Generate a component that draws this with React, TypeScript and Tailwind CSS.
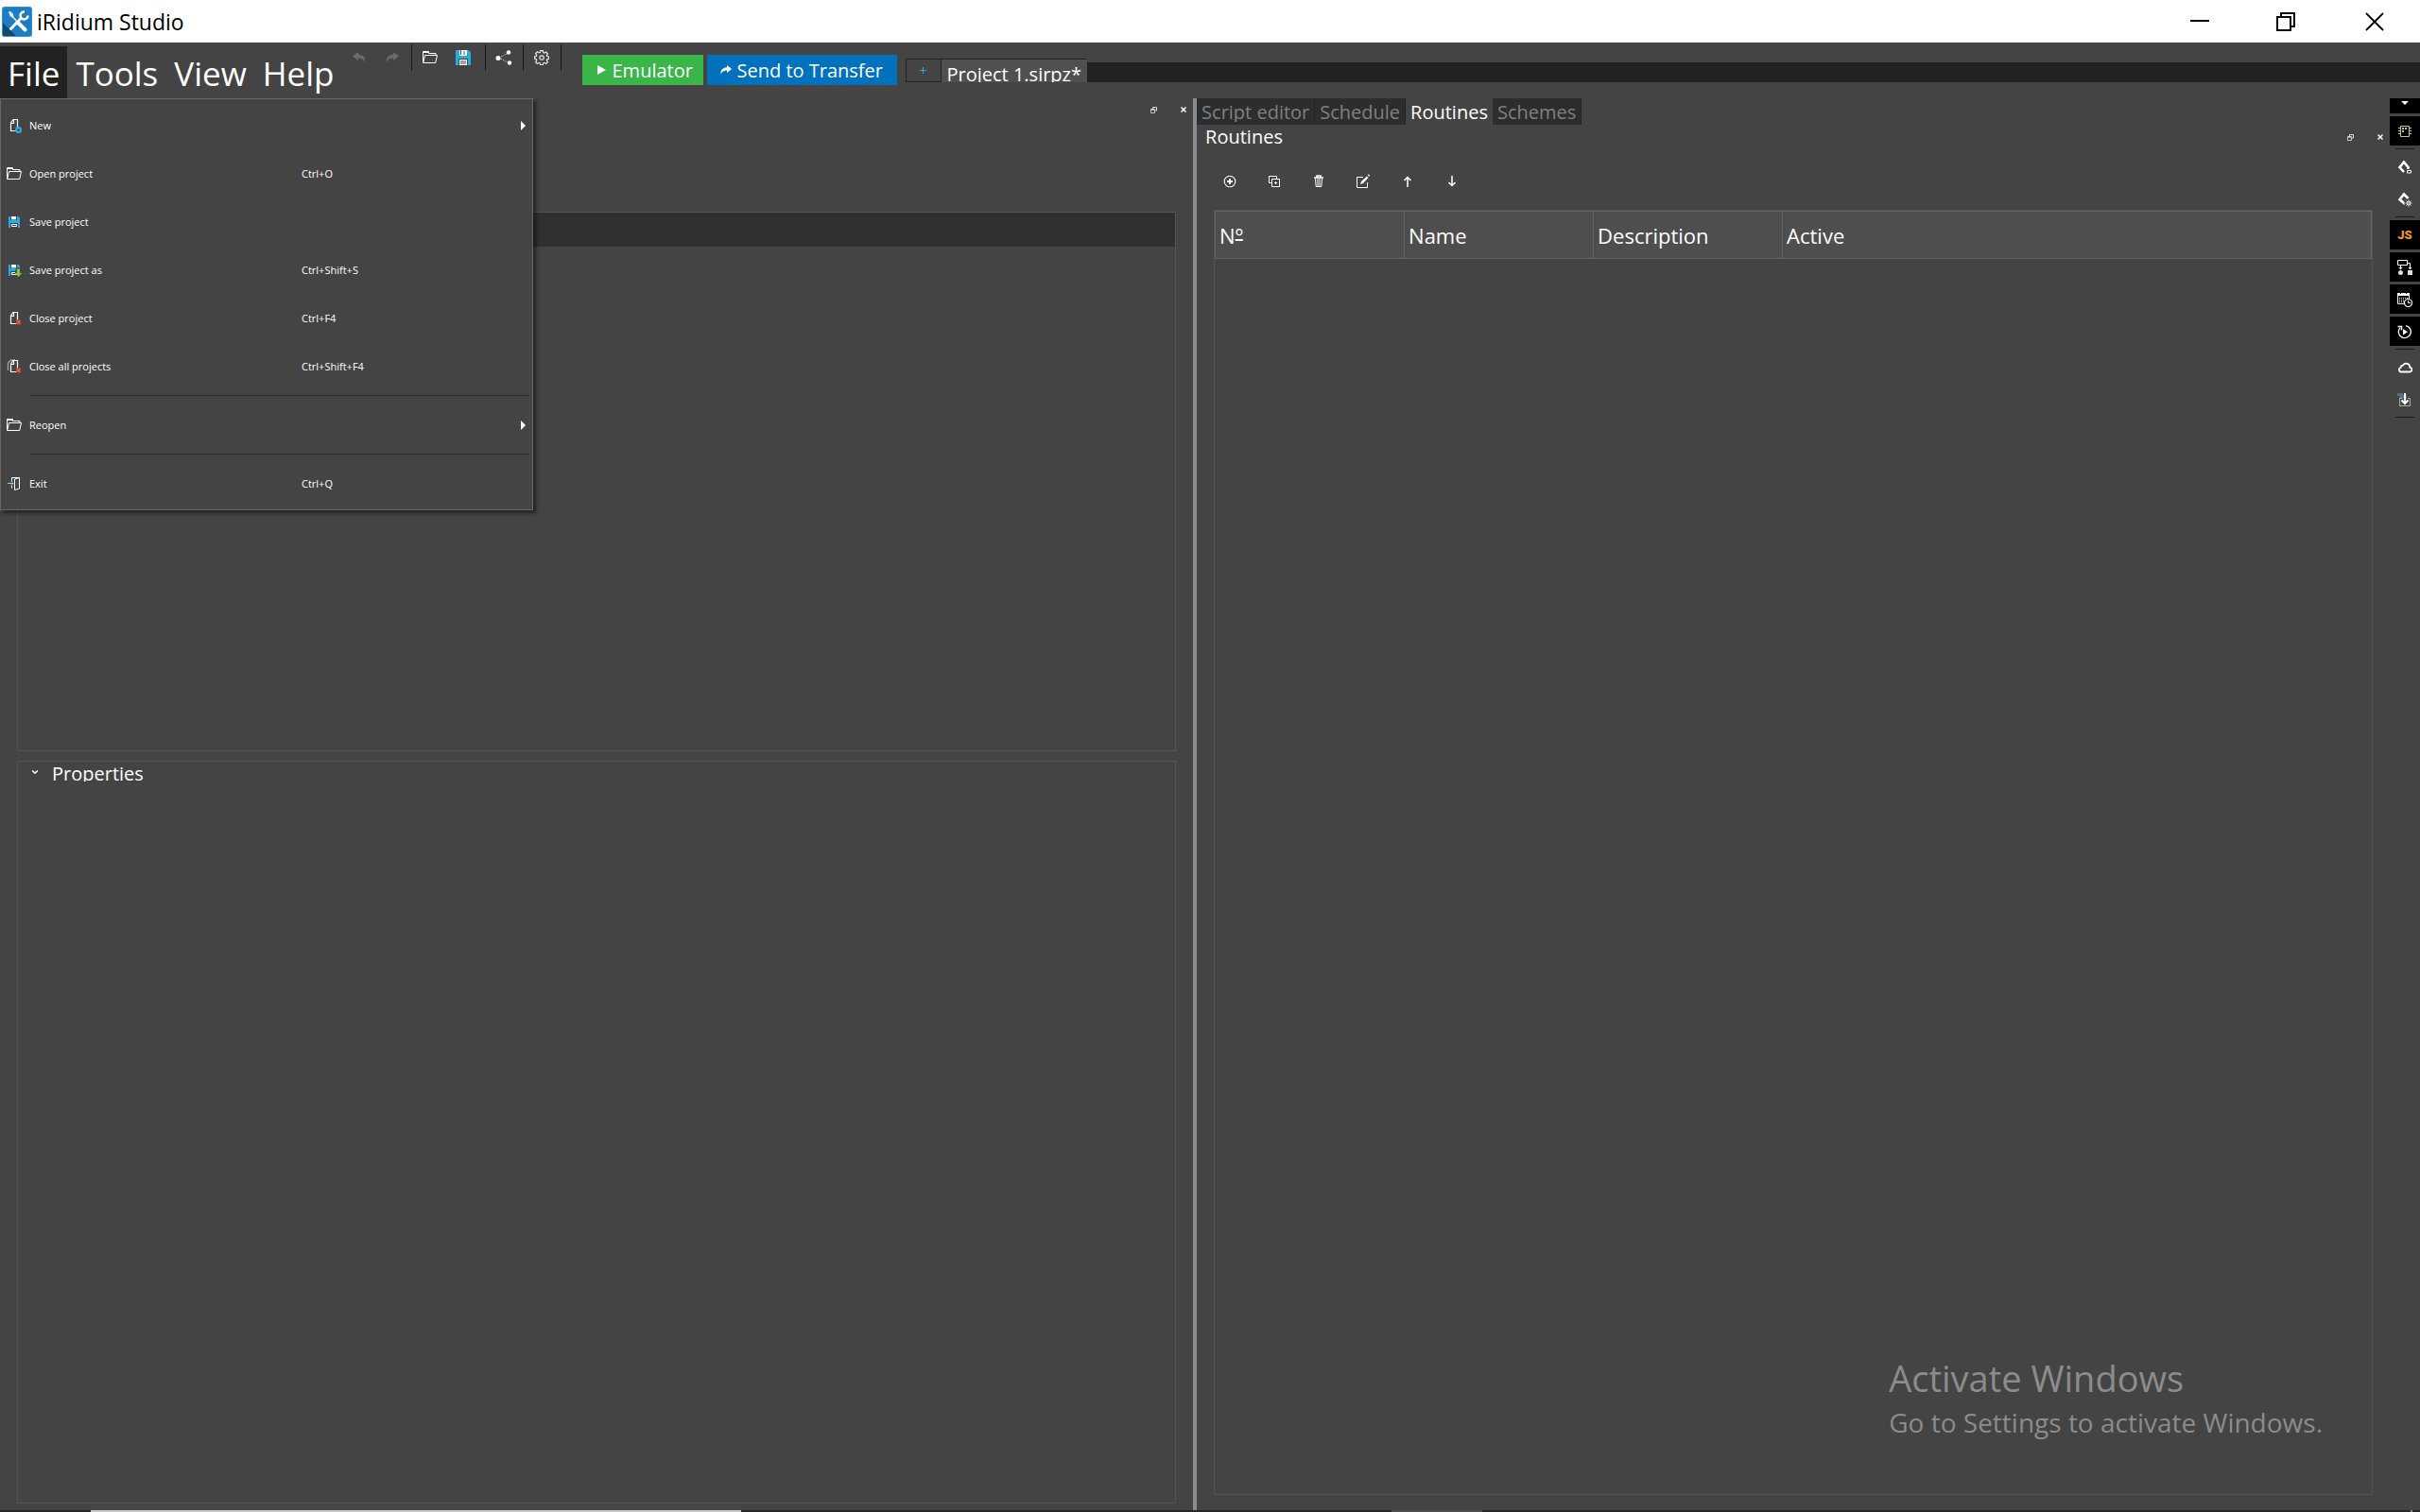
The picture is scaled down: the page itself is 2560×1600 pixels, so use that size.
import type { ReactNode } from "react";

interface MenuEntry {
  label: string;
  shortcut?: string;
  icon: ReactNode;
  submenu?: boolean;
}

const Svg = ({
  w = 16,
  h = 16,
  children,
}: {
  w?: number;
  h?: number;
  children: ReactNode;
}) => (
  <svg
    width={w}
    height={h}
    viewBox={`0 0 ${w} ${h}`}
    fill="none"
    className="shrink-0"
    aria-hidden="true"
  >
    {children}
  </svg>
);

const LogoIcon = () => (
  <Svg w={32} h={32}>
    <rect x="0.5" y="0.5" width="31" height="31" rx="2" fill="#1c7cc4" stroke="#2d96dc" />
    <path d="M1 17v12.500q0 1.500 1.500 1.500H15z" fill="#17466f" />
    <path d="M7 5.500l2-.5 3 3 .5 3.500-1 .5-3-2z" fill="#d9ecfa" />
    <path d="M10 9l6 7" stroke="#d9ecfa" strokeWidth="1.500" />
    <path d="M17 17l7.500 7.500" stroke="#fff" strokeWidth="4" strokeLinecap="round" />
    <path d="M9.500 23.500L20 12.500" stroke="#fff" strokeWidth="3" strokeLinecap="round" />
    <path d="M24 5.500a4 4 0 1 0 3.500 4" stroke="#fff" strokeWidth="2.500" />
  </Svg>
);

const FolderIcon = () => (
  <Svg>
    <path d="M0.500 13.500V1.500h6v2h7.500v2" stroke="#fff" />
    <path d="M1 1h5v2H1z" fill="#fff" />
    <path d="M0.700 13.500L2.500 5.500h13l-1.800 8z" stroke="#fff" />
  </Svg>
);

const SaveIcon = () => (
  <Svg>
    <path d="M0 0h13.500L16 2.500V16H0z" fill="#29abe2" />
    <path d="M4 0h8v6H4z" fill="#fff" />
    <path d="M5.500 0v5M9 1v4" stroke="#555" />
    <path d="M3 9h10v7H3z" fill="#444" />
    <path d="M4 10h8v6H4z" fill="#fff" />
    <path d="M5 12h6M5 14h6" stroke="#444" />
  </Svg>
);

const SmallSaveIcon = ({ as = false }: { as?: boolean }) => (
  <Svg>
    <path d="M2 2h10.500L14 3.500V14H2z" fill="#29abe2" />
    <path d="M5 2h5v3H5z" fill="#fff" />
    <path d="M4 2h1v4H4zM10 2h1v4h-1z" fill="#444" />
    <path d="M4 9h8v5H4z" fill="#444" />
    <path d="M5.500 10.500h5v2h-5z" stroke="#fff" />
    {as && (
      <>
        <path d="M10 5h4v5l2 1-3 4-4-4z" fill="#3d5a3a" />
        <path d="M11 6.500h3V11h2l-3.500 4L9 11h2z" fill="#8cc63f" />
      </>
    )}
  </Svg>
);

const PageIcon = ({ badge }: { badge: "new" | "close" | "closeAll" }) => (
  <Svg>
    {badge === "closeAll" && (
      <path d="M1.500 12V4l3-3H9" stroke="#9a9a9a" strokeWidth="1.500" />
    )}
    <path d="M4.500 13.500V5L7 1.500h4.500v12z" stroke="#fff" strokeWidth="1.200" />
    <path d="M4.500 5.500h3v-4" stroke="#fff" strokeWidth="1.200" />
    {badge === "new" ? (
      <>
        <circle cx="12.500" cy="12.500" r="3.500" fill="#29abe2" />
        <path d="M12.500 11v3M11 12.500h3" stroke="#444" />
      </>
    ) : (
      <>
        <path d="M10 9.500h5v5h-5z" fill="#444" />
        <path d="M10.500 10l4 4M14.500 10l-4 4" stroke="#f15a24" strokeWidth="2" />
      </>
    )}
  </Svg>
);

const ExitIcon = () => (
  <Svg>
    <path d="M5.500 5V1.500h8v11H12M5.500 10v2.500" stroke="#fff" />
    <path d="M8.500 3l5-1.500v11.500l-5 1.500z" fill="#444" stroke="#fff" />
    <path d="M1 7.500h6M4.500 5l2.500 2.500L4.500 10" stroke="#7fd4f5" />
  </Svg>
);

const ReplyIcon = ({ flip = false }: { flip?: boolean }) => (
  <Svg w={14} h={12}>
    <path
      d={
        flip
          ? "M8 0l6 4.500L8 9V6.500C4 6.500 2 8 1 11 0 6 3 3 8 2.800z"
          : "M6 0L0 4.500 6 9V6.500c4 0 6 1.500 7 4.500 1-5-2-8-7-8.200z"
      }
      fill="#6b6b6b"
    />
  </Svg>
);

const SendIcon = () => (
  <Svg w={12} h={10}>
    <path d="M7 0l5 4-5 4V5.500C4 5.500 2 6.500 0.500 9.500 0 5 3 2.500 7 2.300z" fill="#fff" />
  </Svg>
);

const ShareIcon = () => (
  <Svg w={18} h={16}>
    <path d="M4 8L14 3M4 8l10 5.500" stroke="#fff" strokeDasharray="1 1.500" />
    <circle cx="3" cy="8.500" r="2.500" fill="#fff" />
    <circle cx="14" cy="2.500" r="2.200" fill="#fff" />
    <circle cx="15" cy="13.500" r="2.200" fill="#fff" />
  </Svg>
);

const GearIcon = () => (
  <Svg>
    <path
      d="M6.700 0.700h2.600l.5 2 1 .4 1.800-1.100 1.800 1.800-1.100 1.800.4 1 1.900.5v2.200l-1.900.5-.4 1 1.100 1.800-1.800 1.800-1.800-1.100-1 .4-.5 1.900H6.700l-.5-1.900-1-.4-1.800 1.100-1.800-1.800 1.100-1.800-.4-1L.6 9.100V6.900l1.700-.5.4-1-1.100-1.800 1.800-1.800 1.800 1.100 1-.4z"
      stroke="#e8e8e8"
      strokeWidth="1.200"
    />
    <circle cx="8" cy="8" r="2.200" stroke="#e8e8e8" strokeWidth="1.200" />
  </Svg>
);

const RestoreIcon = () => (
  <Svg w={7} h={7}>
    <path d="M2.500 2.500v-2h4v3.500h-2" stroke="#ddd" />
    <path d="M0.500 2.500h4v4h-4z" stroke="#c4c4c4" />
    <path d="M1 3h3" stroke="#fff" />
  </Svg>
);

const CrossIcon = () => (
  <Svg w={6} h={6}>
    <path d="M0.500 0.500l5 5M5.500 0.500l-5 5" stroke="#fff" strokeWidth="1.500" />
  </Svg>
);

const fileMenu: MenuEntry[][] = [
  [
    { label: "New", icon: <PageIcon badge="new" />, submenu: true },
    { label: "Open project", shortcut: "Ctrl+O", icon: <FolderIcon /> },
    { label: "Save project", icon: <SmallSaveIcon /> },
    { label: "Save project as", shortcut: "Ctrl+Shift+S", icon: <SmallSaveIcon as /> },
    { label: "Close project", shortcut: "Ctrl+F4", icon: <PageIcon badge="close" /> },
    { label: "Close all projects", shortcut: "Ctrl+Shift+F4", icon: <PageIcon badge="closeAll" /> },
  ],
  [{ label: "Reopen", icon: <FolderIcon />, submenu: true }],
  [{ label: "Exit", shortcut: "Ctrl+Q", icon: <ExitIcon /> }],
];

const FileMenu = () => (
  <div
    role="menu"
    className="absolute top-full left-0 z-10 w-[564px] border border-[#6a6a5c] bg-[#444444] py-[2px] text-[11px] leading-4 shadow-[3px_3px_4px_rgba(0,0,0,0.5)]"
  >
    {fileMenu.map((group, i) => (
      <div key={i}>
        {i > 0 && (
          <div className="flex h-[11px] items-center pr-[3px] pl-[30px]">
            <div className="h-px w-full bg-[#2d2d2d]" />
          </div>
        )}
        {group.map(({ label, shortcut, icon, submenu }) => (
          <button
            key={label}
            role="menuitem"
            className="flex h-[51px] w-full items-center pr-[7px] pl-[6px] text-left"
          >
            {icon}
            <span className="ml-2 w-[288px]">{label}</span>
            <span className="flex-1">{shortcut}</span>
            {submenu && (
              <Svg w={5} h={10}>
                <path d="M0 0l5 5-5 5z" fill="#fff" />
              </Svg>
            )}
          </button>
        ))}
      </div>
    ))}
  </div>
);

const TitleBar = () => (
  <header className="flex h-[45px] shrink-0 items-center bg-white pl-[2px] text-black">
    <LogoIcon />
    <h1 className="ml-[5px] flex-1 pt-[2px] text-[23px]">iRidium Studio</h1>
    <button aria-label="Minimize" className="flex h-full w-[91px] items-center justify-center">
      <Svg w={20} h={20}>
        <path d="M0 9h20" stroke="#000" strokeWidth="2" />
      </Svg>
    </button>
    <button aria-label="Restore" className="flex h-full w-[91px] items-center justify-center">
      <Svg w={20} h={20}>
        <path d="M5 5V1h14v14h-4" stroke="#000" strokeWidth="2" />
        <path d="M1 5h14v14H1z" stroke="#000" strokeWidth="2" />
      </Svg>
    </button>
    <button aria-label="Close" className="flex h-full w-[97px] items-center justify-center">
      <Svg w={20} h={20}>
        <path d="M1 1l18 18M19 1L1 19" stroke="#000" strokeWidth="1.800" />
      </Svg>
    </button>
  </header>
);

const ToolButton = ({ label, children }: { label: string; children: ReactNode }) => (
  <button aria-label={label} className="flex h-7 w-[35px] items-center justify-center">
    {children}
  </button>
);

const ToolDivider = () => <div className="mx-[2px] h-7 w-px bg-[#1a1a1a]" />;

const TopBar = () => (
  <div className="flex h-[59px] shrink-0">
    <nav className="flex items-end gap-px text-[35px] leading-[53px]">
      <div className="relative">
        <button className="block bg-[#222222] px-2 pt-[2px]">File</button>
        <FileMenu />
      </div>
      <button className="px-2 pt-[2px]">Tools</button>
      <button className="px-2 pt-[2px]">View</button>
      <button className="px-2 pt-[2px]">Help</button>
    </nav>
    <div className="ml-px flex pt-[2px]">
      <ToolButton label="Undo">
        <ReplyIcon />
      </ToolButton>
      <ToolButton label="Redo">
        <ReplyIcon flip />
      </ToolButton>
      <ToolDivider />
      <ToolButton label="Open project">
        <FolderIcon />
      </ToolButton>
      <ToolButton label="Save project">
        <SaveIcon />
      </ToolButton>
      <div className="w-[3px]" />
      <ToolDivider />
      <ToolButton label="Share">
        <ShareIcon />
      </ToolButton>
      <ToolDivider />
      <ToolButton label="Settings">
        <GearIcon />
      </ToolButton>
      <ToolDivider />
    </div>
    <div className="ml-5 flex gap-1 pt-[13px] text-[20px] leading-8">
      <button className="flex h-8 w-32 items-center bg-[#39b54a] pl-4">
        <Svg w={9} h={10}>
          <path d="M0 0l9 5-9 5z" fill="#fff" />
        </Svg>
        <span className="ml-[7px] pt-[2px]">Emulator</span>
      </button>
      <button className="flex h-8 w-[201px] items-center bg-[#0071bc] pl-[14px]">
        <SendIcon />
        <span className="ml-[6px] pt-[2px]">Send to Transfer</span>
      </button>
    </div>
    <div className="ml-[9px] flex h-[42px] flex-1 items-end">
      <button
        aria-label="New project"
        className="flex h-[25px] w-[38px] items-center justify-center border border-[#222222]"
      >
        <Svg w={8} h={7}>
          <path d="M3.500 0v7M0 3.500h7" stroke="#29abe2" />
        </Svg>
      </button>
      <button className="h-[25px] overflow-hidden border-t border-[#222222] bg-[#505050] px-[6px] text-[20px] leading-[32px]">
        Project 1.sirpz*
      </button>
      <div className="h-[21px] flex-1 bg-[#222222]" />
    </div>
  </div>
);

const PanelButtons = () => (
  <div className="flex">
    <button aria-label="Float panel" className="flex h-6 w-8 items-center justify-center">
      <RestoreIcon />
    </button>
    <button aria-label="Close panel" className="flex h-6 w-8 items-center justify-center">
      <CrossIcon />
    </button>
  </div>
);

const LeftPanel = () => (
  <section className="flex w-[49.3%] flex-col gap-[10px] pr-[18px] pb-[7px] pl-[18px]">
    <div className="-mr-[24px] -mb-[10px] flex h-[120px] justify-end">
      <PanelButtons />
    </div>
    <div className="grow-[571] basis-0 border border-[#545454]">
      <div className="h-9 bg-[#303030]" />
    </div>
    <div className="grow-[786] basis-0 border border-[#545454]">
      <button className="flex h-[21px] items-center gap-[15px] overflow-hidden pl-[15px] text-[20px] leading-[25px]">
        <Svg w={6} h={4}>
          <path d="M0 0.500l3 2.500 3-2.500" stroke="#fff" strokeWidth="1.500" />
        </Svg>
        <span className="h-[21px]">Properties</span>
      </button>
    </div>
  </section>
);

const tabs = ["Script editor", "Schedule", "Routines", "Schemes"];

const columns: { key: string; title: ReactNode }[] = [
  {
    key: "number",
    title: (
      <>
        N<span className="underline decoration-2 -underline-offset-[5px]">º</span>
      </>
    ),
  },
  { key: "name", title: "Name" },
  { key: "description", title: "Description" },
  { key: "active", title: "Active" },
];

const routineTools = [
  {
    label: "Add",
    icon: (
      <Svg w={14} h={14}>
        <circle cx="7" cy="7" r="5.800" stroke="#fff" strokeWidth="1.100" />
        <path d="M7 4v6M4 7h6" stroke="#fff" strokeWidth="2" />
      </Svg>
    ),
  },
  {
    label: "Duplicate",
    icon: (
      <Svg w={14} h={14}>
        <path d="M4 8.500H1.500v-7h8V4" stroke="#fff" />
        <path d="M4.500 4.500h8v8h-8zM8.500 7v3M7 8.500h3" stroke="#fff" />
      </Svg>
    ),
  },
  {
    label: "Delete",
    icon: (
      <Svg w={12} h={14}>
        <path d="M1 3h10M4 2.500V1h4v1.500" stroke="#fff" strokeWidth="1.500" />
        <path d="M2.500 4l.7 8.500h5.600L9.500 4M5 4v8M7 4v8" stroke="#fff" />
      </Svg>
    ),
  },
  {
    label: "Edit",
    icon: (
      <Svg>
        <path d="M8 3.500H1.500v11h11V9" stroke="#fff" />
        <path d="M5 11l1-3 6-5.500 1.500 1.500L8 10z" fill="#fff" />
        <path d="M13.500 2l1-1" stroke="#fff" strokeWidth="2" />
      </Svg>
    ),
  },
  {
    label: "Move up",
    icon: (
      <Svg w={8} h={12}>
        <path d="M4 12V1.500M0.500 5L4 1.500 7.500 5" stroke="#fff" strokeWidth="1.500" />
      </Svg>
    ),
  },
  {
    label: "Move down",
    icon: (
      <Svg w={8} h={12}>
        <path d="M4 0v10.500M0.500 7L4 10.500 7.500 7" stroke="#fff" strokeWidth="1.500" />
      </Svg>
    ),
  },
];

const RoutinesPanel = () => (
  <section className="flex min-w-0 flex-1 flex-col">
    <div className="flex h-7 text-[20px] leading-[30px]">
      {tabs.map((tab) => (
        <button
          key={tab}
          className={
            tab === "Routines"
              ? "flex overflow-hidden px-[5px] text-white"
              : "flex overflow-hidden border-r border-[#222222] bg-[#2d2d2d] px-[5px] text-[#808080]"
          }
        >
          {/* the strip is shorter than its text, so descenders are cut */}
          <span className="block h-[25px] overflow-hidden">{tab}</span>
        </button>
      ))}
    </div>
    <div className="-mr-[6px] flex h-[26px] items-center justify-between pl-[9px]">
      <h2 className="text-[20px] leading-[26px]">Routines</h2>
      <PanelButtons />
    </div>
    <div className="flex h-16 items-center pt-1 pl-[11px]">
      {routineTools.map(({ label, icon }) => (
        <button
          key={label}
          aria-label={label}
          className="flex h-8 w-[47px] items-center justify-center"
        >
          {icon}
        </button>
      ))}
    </div>
    <div className="mx-[18px] mb-4 flex-1 border border-[#545454]">
      <table className="w-full table-fixed border-collapse text-[22px]">
        <thead>
          <tr className="h-[50px] bg-[#4e4e4e]">
            {columns.map(({ key, title }) => (
              <th
                key={key}
                className="border border-[#646464] pt-[2px] pl-1 text-left font-normal not-last:w-[200px]"
              >
                {title}
              </th>
            ))}
          </tr>
        </thead>
      </table>
    </div>
  </section>
);

const SideButton = ({
  label,
  active = false,
  children,
}: {
  label: string;
  active?: boolean;
  children: ReactNode;
}) => (
  <button
    aria-label={label}
    className={
      active
        ? "mb-[3px] flex h-[31px] w-full items-center justify-center bg-black"
        : "mb-[3px] flex h-[31px] w-full items-center justify-center"
    }
  >
    {children}
  </button>
);

const SideDivider = () => <div className="mx-[6px] h-1 border-t border-[#1a1a1a]" />;

const SideBar = () => (
  <aside className="w-8 shrink-0">
    <button aria-label="More" className="mb-[3px] flex h-4 w-full justify-center bg-black pt-[3px]">
      <Svg w={8} h={4}>
        <path d="M0 0h8L4 4z" fill="#fff" />
      </Svg>
    </button>
    <SideButton label="Devices" active>
      <Svg w={14} h={12}>
        <path
          d="M2.500 0.500h9v11h-9zM0 2.500h2M0 5.500h2M0 8.500h2M12 2.500h2M12 5.500h2M12 8.500h2"
          stroke="#b5d56a"
        />
        <path d="M4 2h2v2H4zM7 2h2v2H7zM4 5h2v2H4z" fill="#b5d56a" />
      </Svg>
    </SideButton>
    <SideDivider />
    <SideButton label="Tags">
      <Svg>
        <path d="M7 13L2.500 8 7 2.500 11.500 8v2" stroke="#fff" strokeWidth="2.600" />
        <path d="M9 10h6v5H9z" fill="#444" />
        <path d="M10.500 11.500h4v2.500h-4z" stroke="#fff" />
      </Svg>
    </SideButton>
    <SideButton label="Tag settings">
      <Svg>
        <path d="M8 13L2.500 8 7 2.500 11.500 7" stroke="#fff" strokeWidth="2.600" />
        <circle cx="12" cy="12" r="4.500" fill="#444" />
        <path
          d="M12 8.500v7M8.500 12h7M9.500 9.500l5 5M14.500 9.500l-5 5"
          stroke="#fff"
          strokeWidth="0.900"
        />
        <circle cx="12" cy="12" r="1.300" fill="#444" stroke="#fff" strokeWidth="0.800" />
      </Svg>
    </SideButton>
    <SideDivider />
    <SideButton label="Script editor" active>
      <span className="font-[Roboto,sans-serif] text-[13px] font-black text-[#f7931e]">JS</span>
    </SideButton>
    <SideButton label="Schemes" active>
      <Svg>
        <path d="M0.500 0.500h10v5h-10zM10.500 3.500h3V9M3.500 5.500V9" stroke="#fff" />
        <path d="M1.500 8h4l-2 2.500zM11.500 8h4l-2 2.500z" fill="#fff" />
        <circle cx="3.500" cy="13.500" r="2.500" fill="#ddd" />
        <path d="M11 11h5v5h-5z" fill="#ddd" />
      </Svg>
    </SideButton>
    <SideButton label="Schedule" active>
      <Svg>
        <path d="M0.500 1.500h12v11h-12z" stroke="#fff" />
        <path d="M0 1h13v3H0z" fill="#fff" />
        <path d="M3.500 0v2M9.500 0v2" stroke="#000" />
        <path d="M2 6.500h9M2 8.500h9M2 10.500h6" stroke="#fff" strokeDasharray="1 1" />
        <circle cx="11.500" cy="11.500" r="4" fill="#000" stroke="#fff" strokeWidth="1.200" />
        <path d="M11.500 9v2.500H14" stroke="#fff" />
      </Svg>
    </SideButton>
    <SideButton label="Routines" active>
      <Svg>
        <path d="M9 1.700a6.500 6.500 0 1 1-6 2" stroke="#fff" strokeWidth="1.300" />
        <path d="M0.500 2.500h4v4" stroke="#fff" strokeWidth="1.500" />
        <path d="M6 5l5 3.200L6 11.500z" fill="#fff" />
      </Svg>
    </SideButton>
    <SideDivider />
    <SideButton label="Cloud">
      <Svg w={16} h={12}>
        <path
          d="M4 10.500h9a2.300 2.300 0 0 0 .3-4.600A4 4 0 0 0 6 3.500 3 3 0 0 0 3.500 6a2.300 2.300 0 0 0 .5 4.500z"
          stroke="#fff"
          strokeWidth="1.800"
        />
      </Svg>
    </SideButton>
    <SideButton label="Download">
      <Svg>
        <path d="M0 1h6v3H0z" fill="#56707d" />
        <path d="M2 3h8v4H2z" fill="#56707d" />
        <path d="M5 6.500H2.500v8h11v-8H11" stroke="#aaa" />
        <path d="M8 1v10M4.500 8.500L8 12l3.500-3.500" stroke="#fff" strokeWidth="2" />
      </Svg>
    </SideButton>
    <SideDivider />
  </aside>
);

const TaskbarEdge = () => (
  <footer className="flex h-[2px] shrink-0 bg-[#27292c]">
    <div className="ml-24 w-[688px] bg-[#c9c9c9]" />
    <div className="ml-[688px] w-24 bg-[#4d4d4d]" />
    <div className="mr-2 ml-auto w-[2px] bg-[#8a8a8a]" />
  </footer>
);

const App = () => (
  <div className="relative flex h-screen flex-col overflow-hidden bg-[#444444] font-['Open_Sans','Noto_Sans',sans-serif] text-white">
    <TitleBar />
    <TopBar />
    <main className="flex min-h-0 flex-1">
      <LeftPanel />
      <div className="w-1 shrink-0 bg-[#868c96]" />
      <RoutinesPanel />
      <SideBar />
    </main>
    <TaskbarEdge />
    <div className="pointer-events-none absolute right-[103px] bottom-[75px] text-[#8c8c8c]">
      <p className="text-[38px] leading-[54px]">Activate Windows</p>
      <p className="text-[28px] leading-10">Go to Settings to activate Windows.</p>
    </div>
  </div>
);

export default App;
